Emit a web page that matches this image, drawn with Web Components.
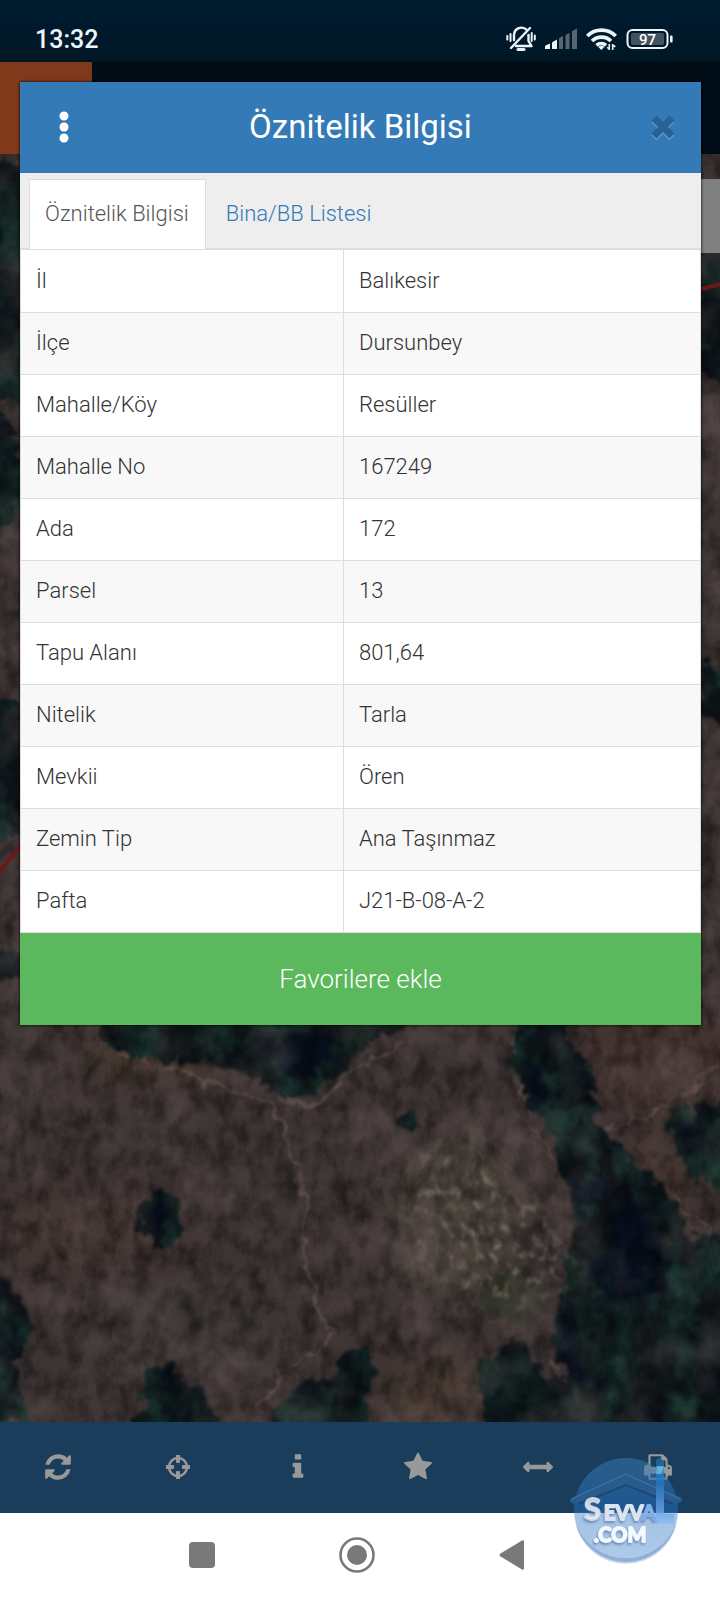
<!DOCTYPE html>
<html lang="tr">
<head>
<meta charset="utf-8">
<meta name="viewport" content="width=device-width, initial-scale=1">
<title>Öznitelik Bilgisi</title>
<style>
	body {
		margin: 0;
		font-family: Roboto, 'Noto Sans', sans-serif;
		background: #fff;
	}
</style>
</head>
<body>

<app-screen>
	<status-bar slot="status" time="13:32" battery="97"></status-bar>
	<map-view slot="map"></map-view>
	<info-dialog slot="dialog" heading="Öznitelik Bilgisi">
		<tab-strip slot="tabs" items="Öznitelik Bilgisi|Bina/BB Listesi"></tab-strip>
		<attribute-table></attribute-table>
		<span slot="action">Favorilere ekle</span>
	</info-dialog>
	<tool-bar slot="tools"></tool-bar>
	<nav-bar slot="nav"></nav-bar>
	<site-badge slot="badge"></site-badge>
</app-screen>

<script>
/**
 * @file Parcel query screen, built from small custom elements.
 */

/**
 * Base class, puts the markup of an element in its shadow root.
 */
class BaseElement extends HTMLElement {
	constructor() {
		super()
		this.attachShadow({ mode: 'open' })
	}

	connectedCallback() {
		const template = document.createElement('template')
		template.innerHTML = `<style>:host, * { box-sizing: border-box }</style>${this.render()}`
		this.shadowRoot.replaceChildren(template.content.cloneNode(true))
	}
}

/**
 * Page frame: bars above and below, the map takes what is left.
 */
class AppScreen extends BaseElement {
	render() {
		return `
			<style>
				:host {
					display: flex;
					flex-direction: column;
					position: relative;
					min-height: 100vh;
					overflow: hidden;
				}
				header {
					height: 92px;
					display: flex;
					background: #000c16;
				}
				header span {
					width: 92px;
					background: #80391b;
				}
				main {
					flex: 1;
					display: flex;
				}
				.over {
					position: absolute;
					top: 82px;
					left: 20px;
					right: 19px;
				}
				.badge {
					position: absolute;
					right: 37px;
					bottom: 34px;
				}
			</style>
			<slot name="status"></slot>
			<header><span></span></header>
			<main><slot name="map"></slot></main>
			<slot name="tools"></slot>
			<slot name="nav"></slot>
			<div class="over"><slot name="dialog"></slot></div>
			<div class="badge"><slot name="badge"></slot></div>
		`
	}
}

class StatusBar extends BaseElement {
	render() {
		return `
			<style>
				:host {
					display: flex;
					align-items: center;
					justify-content: space-between;
					height: 62px;
					padding: 16px 47px 0 35px;
					background: linear-gradient(#001a30, #001929 80%, #001622);
					color: #eef5fa;
					font-size: 25px;
					font-weight: 500;
				}
				div {
					display: flex;
					align-items: center;
					gap: 9px;
				}
				svg {
					display: block;
				}
				.battery {
					font-size: 15px;
				}
			</style>
			<time>${this.getAttribute('time')}</time>
			<div>
				<svg width="30" height="26" viewBox="0 0 30 26" fill="none" stroke="#eef5fa" stroke-width="2.4" stroke-linecap="round">
					<path d="M20 3.200A7.500 7.500 0 0 0 8 9v5M22.500 9v6l3 5H10" stroke-linejoin="round"/>
					<path d="M24 2 5 22" />
					<path d="M12 23.500h6" stroke-width="3"/>
					<path d="M4.500 8v7M1.300 10v3.500M25.700 7v8M28.800 9.500v4" stroke-width="2"/>
				</svg>
				<svg width="32" height="22" viewBox="0 0 32 22">
					<path fill="#eef5fa" d="M0 21v-2.500q0-1 1-1.300l4-1.700V21zM7 21v-6q0-1 1-1.300l4-2.200V21z"/>
					<path fill="#586670" d="M14 21V11q0-1 1-1.500l3-1.500v13zM20.500 21V8q0-1 1-1.500L24.500 5v16zM27 21V4q0-1 1-1.500L32 .5V21z"/>
				</svg>
				<svg width="31" height="24" viewBox="0 0 31 24" fill="none" stroke="#eef5fa" stroke-width="3.600">
					<path d="M1.300 9a20 20 0 0 1 28.400 0M6 14a13.500 13.500 0 0 1 19 0M10.500 18.400a7 7 0 0 1 9.500 0"/>
					<path d="m15.300 23-3-3a4.400 4.400 0 0 1 6 0z" fill="#eef5fa" stroke="none"/>
					<path d="M23.300 17v6M26.700 17v6M23.500 22.500l-2.200-2.200M26.500 17.500l2.800 2.400" stroke-width="1.600"/>
				</svg>
				<svg class="battery" width="47" height="22" viewBox="0 0 47 22">
					<rect x="1.500" y="2" width="40" height="18" rx="5" fill="none" stroke="#eef5fa" stroke-width="2"/>
					<rect x="5" y="5" width="33" height="12" rx="2" fill="#42535e"/>
					<rect x="44" y="7.500" width="2.600" height="7" rx="1" fill="#eef5fa"/>
					<text x="21.500" y="16.500" text-anchor="middle" fill="#fff">${this.getAttribute('battery')}</text>
				</svg>
			</div>
		`
	}
}

/**
 * Aerial view under the dialog, with the parcel border in red.
 */
class MapView extends BaseElement {
	render() {
		return `
			<style>
				:host {
					display: block;
					flex: 1;
					position: relative;
					background: #393031;
					overflow: hidden;
				}
				svg {
					position: absolute;
					inset: 0;
					width: 100%;
					height: 100%;
				}
				filter {
					color-interpolation-filters: sRGB;
				}
				.panel {
					position: absolute;
					top: 25px;
					right: 0;
					width: 40px;
					height: 74px;
					background: #808080;
				}
			</style>
			<svg viewBox="0 154 720 1268" preserveAspectRatio="xMidYMax slice" aria-hidden="true">
				<defs>
					<filter id="rough" x="-10%" y="-10%" width="120%" height="120%">
						<feTurbulence type="fractalNoise" baseFrequency=".07" numOctaves="3" seed="4"/>
						<feDisplacementMap in="SourceGraphic" scale="26" xChannelSelector="R" yChannelSelector="G"/>
						<feGaussianBlur stdDeviation="2"/>
					</filter>
					<filter id="line" x="-10%" y="-10%" width="120%" height="120%">
						<feTurbulence type="fractalNoise" baseFrequency=".05" numOctaves="3" seed="9"/>
						<feDisplacementMap in="SourceGraphic" scale="20" xChannelSelector="R" yChannelSelector="G"/>
						<feGaussianBlur stdDeviation="1"/>
					</filter>
					<filter id="soft" x="-40%" y="-40%" width="180%" height="180%">
						<feGaussianBlur stdDeviation="18"/>
					</filter>
					<filter id="grain" x="0" y="0" width="100%" height="100%">
						<feTurbulence type="fractalNoise" baseFrequency=".06 .045" numOctaves="5" seed="12"/>
						<feColorMatrix values="0 0 0 0 0  0 0 0 0 0  0 0 0 0 0  1 0 0 0 -.38"/>
						<feGaussianBlur stdDeviation=".6"/>
					</filter>
					<filter id="glow" x="0" y="0" width="100%" height="100%">
						<feTurbulence type="fractalNoise" baseFrequency=".02 .018" numOctaves="6" seed="31"/>
						<feColorMatrix values="0 0 0 0 .5  0 0 0 0 .43  0 0 0 0 .42  0 1.200 0 0 -.52"/>
						<feGaussianBlur stdDeviation=".6"/>
					</filter>
					<filter id="leaf" x="-5%" y="-5%" width="110%" height="110%">
						<feTurbulence type="fractalNoise" baseFrequency=".03 .02" numOctaves="4" seed="6" result="n"/>
						<feColorMatrix in="n" values="0 0 0 0 .1  0 0 0 0 .2  0 0 0 0 .18  0 3 0 0 -1.200" result="g"/>
						<feComposite in="g" in2="SourceGraphic" operator="in" result="g2"/>
						<feMerge result="m"><feMergeNode in="SourceGraphic"/><feMergeNode in="g2"/></feMerge>
						<feTurbulence type="fractalNoise" baseFrequency=".07" numOctaves="3" seed="4" result="d"/>
						<feDisplacementMap in="m" in2="d" scale="24" xChannelSelector="R" yChannelSelector="G"/>
						<feGaussianBlur stdDeviation="1.500"/>
					</filter>
					<filter id="speck" x="0" y="0" width="100%" height="100%">
						<feTurbulence type="fractalNoise" baseFrequency=".1 .08" numOctaves="3" seed="17"/>
						<feColorMatrix values="0 0 0 0 .5  0 0 0 0 .47  0 0 0 0 .41  0 4 0 0 -2.100" result="s"/>
						<feGaussianBlur in="SourceGraphic" stdDeviation="16" result="b"/>
						<feComposite in="s" in2="b" operator="in"/>
						<feGaussianBlur stdDeviation="1"/>
					</filter>
				</defs>
				<rect y="154" width="720" height="1268" fill="#3e3434"/>
				<g filter="url(#soft)">
					<ellipse cx="455" cy="1220" rx="70" ry="90" fill="#4b423c"/>
					<ellipse cx="660" cy="1060" rx="80" ry="50" fill="#46342f"/>
					<ellipse cx="90" cy="1230" rx="90" ry="40" fill="#463833"/>
					<ellipse cx="180" cy="1330" rx="110" ry="40" fill="#3d3735"/>
					<ellipse cx="150" cy="1060" rx="70" ry="14" fill="#4e3c2c"/>
					<ellipse cx="440" cy="1395" rx="60" ry="34" fill="#473931"/>
					<ellipse cx="650" cy="1190" rx="40" ry="60" fill="#46362f"/>
				</g>
				<g filter="url(#line)" fill="none" stroke="#6a5a53" stroke-width="3" opacity=".6">
					<path d="M100 1045q90 30 175 60l19 50 11 50v60l12 40 13 30-55 48-20 26"/>
					<path d="M597 1135l64-24 59-46M664 1185l43 44 10 30M512 1030l4 50 18 44 22 50M340 1078l60-36"/>
					<path d="M280 1098l40 8 22-24M552 1360l20 34" stroke-width="5"/>
				</g>
				<g fill="#0d1419" filter="url(#leaf)">
					<path d="M94 1010l14 37 44 13h50l60 20 23 15h32l23-18 18-30 42-15 4-22z"/>
					<path d="M520 1010l-8 53 16 40 23 34 11 36 12 40v30l-9 24-7 46-7 40 23 30-28-6-27-40-41 30 4 60h250v-190h-45l-9-27-23-30-28-26-32-34v-43l-25-33-2-62z"/>
					<path d="M666 1117l60-18v92l-37-14z"/>
					<ellipse cx="162" cy="1220" rx="23" ry="28"/>
					<ellipse cx="409" cy="1121" rx="8" ry="13"/>
					<path d="M136 1430l14-65h22l8 20 20-2 20 47zM262 1430l36-47 42-6v-27h27l9 27-13 23 6 30z"/>
					<path d="M-8 1270l26 30 19 27-19 33 10 62h-36zM-8 160h34v240H-8zM-8 400l20 20 14 80-34 40zM-8 700h34v130l-34 14zM-8 950h34v30H-8z"/>
					<path d="M700 250h30v130h-30zM700 660l30 20v40h-30z"/>
				</g>
				<ellipse cx="514" cy="1297" rx="32" ry="28" fill="#283022" opacity=".7" filter="url(#rough)"/>
				<g filter="url(#rough)" fill="#050c1c" opacity=".8">
					<path d="M625 1190l35 40 8 60-50 10-30-20z"/>
					<path d="M570 1180l44 2-34 40zM564 1300l20 70 30 20-50-8zM670 1125l30-4-6 40z"/>
					<path d="M250 1040l70-10 20 30-50 20zM152 1210l10-14 6 10-8 30zM152 1372l20-4v24zM525 1060l8 40 14 10-6-50z"/>
				</g>
				<g filter="url(#speck)" opacity=".8">
					<path d="M420 1150l70-6 24 50 50 20 4 70-80 30-80-60z"/>
					<path d="M0 0h1v1H0zM719 1421h1v1h-1z"/>
				</g>
				<rect y="154" width="720" height="1268" filter="url(#grain)"/>
				<rect y="154" width="720" height="1268" filter="url(#glow)" opacity=".6"/>
				<path d="M-4 876l26-32M698 290l26-7" stroke="#6e1719" stroke-width="4"/>
			</svg>
			<div class="panel"></div>
		`
	}
}

/**
 * Dialog with a title bar, a slot for tabs and content, and one action.
 */
class InfoDialog extends BaseElement {
	render() {
		return `
			<style>
				:host {
					display: block;
					background: #fff;
					box-shadow: 0 0 3px #000;
				}
				header {
					display: grid;
					grid-template-columns: 88px 1fr 88px;
					height: 91px;
					padding-bottom: 2px;
					align-items: center;
					background: #337ab7;
					color: #fff;
				}
				h1 {
					margin: 0;
					font-size: 33px;
					font-weight: 400;
					line-height: 40px;
					text-align: center;
				}
				button {
					border: 0;
					padding: 0;
					background: none;
					font: inherit;
				}
				.icon {
					height: 88px;
					display: grid;
					place-items: center;
				}
				.close {
					justify-self: end;
					width: 76px;
				}
				.action {
					display: block;
					width: 100%;
					height: 92px;
					background: #5cb85c;
					color: #fff;
					font-size: 26px;
					font-weight: 300;
				}
			</style>
			<header>
				<button class="icon" aria-label="Menü">
					<svg width="10" height="32" viewBox="0 0 10 32" fill="#fff"><circle cx="5" cy="5" r="4.500"/><circle cx="5" cy="16" r="4.500"/><circle cx="5" cy="27" r="4.500"/></svg>
				</button>
				<h1>${this.getAttribute('heading')}</h1>
				<button class="icon close" aria-label="Kapat">
					<svg width="24" height="26" viewBox="0 0 24 26" fill="none" stroke-width="7"><path d="m3 6 18 18M21 6 3 24" stroke="#5d97c8"/><path d="m3 4 18 18M21 4 3 22" stroke="#296292"/></svg>
				</button>
			</header>
			<slot name="tabs"></slot>
			<slot></slot>
			<button class="action"><slot name="action"></slot></button>
		`
	}
}

class TabStrip extends BaseElement {
	render() {
		const tabs = this.getAttribute('items').split('|')

		return `
			<style>
				:host {
					display: block;
					background: #eeeeef;
				}
				div {
					display: flex;
					gap: 4px;
					padding: 6px 9px 0;
					border-bottom: 2px solid #ddd;
				}
				button {
					height: 70px;
					margin-bottom: -1px;
					padding: 0 16px 3px 15px;
					border: 1px solid transparent;
					border-bottom: 0;
					background: none;
					color: #337ab7;
					font: 300 22px Roboto, sans-serif;
				}
				button[aria-selected=true] {
					border-color: #ddd;
					background: #fff;
					color: #555;
				}
			</style>
			<div role="tablist">
				${tabs.map((tab, i) => `<button role="tab" aria-selected="${i === 0}">${tab}</button>`).join('')}
			</div>
		`
	}
}

const attributes = [
	['İl', 'Balıkesir'],
	['İlçe', 'Dursunbey'],
	['Mahalle/Köy', 'Resüller'],
	['Mahalle No', '167249'],
	['Ada', '172'],
	['Parsel', '13'],
	['Tapu Alanı', '801,64'],
	['Nitelik', 'Tarla'],
	['Mevkii', 'Ören'],
	['Zemin Tip', 'Ana Taşınmaz'],
	['Pafta', 'J21-B-08-A-2'],
]

class AttributeTable extends BaseElement {
	render() {
		return `
			<style>
				:host {
					display: block;
				}
				table {
					width: 100%;
					border-collapse: collapse;
					font-size: 22px;
					line-height: 31px;
					color: #333;
				}
				th, td {
					height: 62px;
					padding: 0 15px 1px;
					border: 1px solid #ddd;
					font-weight: 300;
					text-align: left;
				}
				tr:first-child > * {
					border-top: 0;
				}
				th {
					width: 47.5%;
				}
				tr:nth-child(even) {
					background: #f8f8f8;
				}
			</style>
			<table>
				${attributes.map(([name, value]) => `<tr><th scope="row">${name}</th><td>${value}</td></tr>`).join('')}
			</table>
		`
	}
}

const toolIcons = [
	['Yenile', '0 -128 1536 1792', '<path d="M1511 928q0 5-1 7-64 268-268 434.500t-478 166.500q-146 0-282.500-55t-243.500-157l-129 129q-19 19-45 19t-45-19-19-45v-448q0-26 19-45t45-19h448q26 0 45 19t19 45-19 45l-137 137q71 66 161 102t187 36q134 0 250-65t186-179q11-17 53-117 8-23 30-23h192q13 0 22.500 9.500t9.500 22.500zm25-800v448q0 26-19 45t-45 19h-448q-26 0-45-19t-19-45 19-45l138-138q-148-137-349-137-134 0-250 65t-186 179q-11 17-53 117-8 23-30 23h-199q-13 0-22.500-9.500t-9.500-22.500v-7q65-268 270-434.500t480-166.500q146 0 284 55.500t245 156.500l130-129q19-19 45-19t45 19 19 45z"/>'],
	['Konum', '0 0 30 30', '<circle cx="15" cy="15" r="9" fill="none" stroke="#999" stroke-width="2.500"/><path d="M13 3h4v7q0 1-1 1h-2q-1 0-1-1zM13 27h4v-7q0-1-1-1h-2q-1 0-1 1zM3 13v4h7q1 0 1-1v-2q0-1-1-1zM27 13v4h-7q-1 0-1-1v-2q0-1 1-1z"/>'],
	['Bilgi', '0 0 1792 1792', '<path d="M1216 1344v128q0 26-19 45t-45 19h-512q-26 0-45-19t-19-45v-128q0-26 19-45t45-19h64v-384h-64q-26 0-45-19t-19-45v-128q0-26 19-45t45-19h384q26 0 45 19t19 45v576h64q26 0 45 19t19 45zm-128-1152v192q0 26-19 45t-45 19h-256q-26 0-45-19t-19-45v-192q0-26 19-45t45-19h256q26 0 45 19t19 45z"/>'],
	['Favoriler', '0 0 1792 1792', '<path d="M1728 647q0 22-26 48l-363 354 86 500q1 7 1 20 0 21-10.500 35.500t-30.500 14.500q-19 0-40-12l-449-236-449 236q-22 12-40 12-21 0-31.500-14.500t-10.500-35.500q0-6 2-20l86-500-364-354q-25-27-25-48 0-37 56-46l502-73 225-455q19-41 49-41t49 41l225 455 502 73q56 9 56 46z"/>'],
	['Ölç', '0 0 1792 1792', '<path d="M1792 896q0 26-19 45l-256 256q-19 19-45 19t-45-19-19-45v-128h-1024v128q0 26-19 45t-45 19-45-19l-256-256q-19-19-19-45t19-45l256-256q19-19 45-19t45 19 19 45v128h1024v-128q0-26 19-45t45-19 45 19l256 256q19 19 19 45z"/>'],
	['Yazdır', '0 0 1792 1792', '<path d="M448 1536h896v-256h-896v256zm0-640h896v-384h-160q-40 0-68-28t-28-68v-160h-640v640zm1152 64q0-26-19-45t-45-19-45 19-19 45 19 45 45 19 45-19 19-45zm128 0v416q0 13-9.500 22.500t-22.500 9.500h-224v160q0 40-28 68t-68 28h-960q-40 0-68-28t-28-68v-160h-224q-13 0-22.500-9.500t-9.500-22.500v-416q0-79 56.500-135.500t135.500-56.500h64v-544q0-40 28-68t68-28h672q40 0 88 20t76 48l152 152q28 28 48 76t20 88v256h64q79 0 135.500 56.500t56.500 135.500z"/>'],
]

class ToolBar extends BaseElement {
	render() {
		return `
			<style>
				:host {
					display: flex;
					height: 91px;
					margin-left: -2px;
					padding: 0 2px 2px 0;
					background: #1a3d5c;
				}
				button {
					flex: 1;
					display: grid;
					place-items: center;
					padding: 0;
					border: 0;
					background: none;
				}
				svg {
					width: 30px;
					height: 30px;
					fill: #999;
				}
			</style>
			${toolIcons.map(([name, box, shape]) => `<button aria-label="${name}"><svg viewBox="${box}">${shape}</svg></button>`).join('')}
		`
	}
}

class NavBar extends BaseElement {
	render() {
		return `
			<style>
				:host {
					display: flex;
					justify-content: center;
					align-items: center;
					gap: 119px;
					height: 87px;
					padding: 0 6px 4px 0;
					background: #fff;
				}
				button {
					padding: 0;
					border: 0;
					background: none;
				}
				svg {
					display: block;
					fill: #797979;
				}
			</style>
			<button aria-label="Son uygulamalar"><svg width="36" height="36"><rect x="5" y="5" width="26" height="26" rx="4"/></svg></button>
			<button aria-label="Ana ekran"><svg width="36" height="36"><circle cx="18" cy="18" r="16.500" fill="none" stroke="#797979" stroke-width="2.600"/><circle cx="18" cy="18" r="10"/></svg></button>
			<button aria-label="Geri"><svg width="36" height="36"><path d="M6.500 16.500 28 3.500q2-1 2 1v27q0 2-2 1l-21.500-13q-2-1.500 0-3z"/></svg></button>
		`
	}
}

/**
 * Translucent round logo lying over both bottom bars.
 */
class SiteBadge extends BaseElement {
	render() {
		return `
			<style>
				:host {
					display: block;
					pointer-events: none;
				}
				svg {
					display: block;
				}
				text {
					font-family: Lato, sans-serif;
					font-weight: 700;
					stroke-width: 1.8;
					stroke-linejoin: round;
				}
				.letters {
					filter: drop-shadow(-1px 2px 1px #3c64948c);
				}
			</style>
			<svg width="114" height="120" viewBox="0 0 114 120">
				<defs>
					<linearGradient id="disc" x2="0" y2="1">
						<stop offset="0" stop-color="#3a7db5" stop-opacity=".5"/>
						<stop offset=".52" stop-color="#1c62ad" stop-opacity=".65"/>
						<stop offset=".53" stop-color="#4a86cc" stop-opacity=".5"/>
						<stop offset="1" stop-color="#6f9fd6" stop-opacity=".55"/>
					</linearGradient>
					<linearGradient id="pillar" x2="0" y2="1">
						<stop offset="0" stop-color="#2d8fe0" stop-opacity=".4"/>
						<stop offset=".4" stop-color="#2377c6" stop-opacity=".8"/>
						<stop offset="1" stop-color="#8dbcf5" stop-opacity=".8"/>
					</linearGradient>
					<linearGradient id="metal" x2="0" y2="1">
						<stop offset="0" stop-color="#a9b9c9"/>
						<stop offset=".5" stop-color="#d8e1ee"/>
						<stop offset="1" stop-color="#fff"/>
					</linearGradient>
				</defs>
				<circle cx="57" cy="64" r="52" fill="url(#disc)"/>
				<path d="M6 76a52 52 0 0 0 102 0A54 54 0 0 1 6 76z" fill="#4577ad" opacity=".3"/>
				<path d="M1 53v3l4 2 52-20 51 20 5-3v-3L57 28z" fill="#2a5c8c" opacity=".9"/>
				<path d="M2 53 57 28l54 25" fill="none" stroke="#5f8bb5" opacity=".6"/>
				<path d="M10 58 57 39l47 19" fill="none" stroke="#123e70" stroke-width="2" opacity=".6"/>
				<path d="M87 14q6-6 8 2v52h10v10H87z" fill="url(#pillar)"/>
				<path d="M88 20h7l-3 8h-5z" fill="#73d1e6" opacity=".6"/>
				<g class="letters">
					<text x="15" y="74" font-size="31" fill="url(#metal)" stroke="#cdd8e6">S</text>
					<text x="35" y="74" font-size="20" fill="#dbe4ef" stroke="#dbe4ef">EVV</text>
					<text x="73" y="74" font-size="20" fill="#80aee8" stroke="#80aee8">A</text>
					<text x="25" y="96" font-size="20" fill="#f4f8ff" stroke="#f4f8ff">.COM</text>
				</g>
			</svg>
		`
	}
}

customElements.define('app-screen', AppScreen)
customElements.define('status-bar', StatusBar)
customElements.define('map-view', MapView)
customElements.define('info-dialog', InfoDialog)
customElements.define('tab-strip', TabStrip)
customElements.define('attribute-table', AttributeTable)
customElements.define('tool-bar', ToolBar)
customElements.define('nav-bar', NavBar)
customElements.define('site-badge', SiteBadge)
</script>
</body>
</html>
